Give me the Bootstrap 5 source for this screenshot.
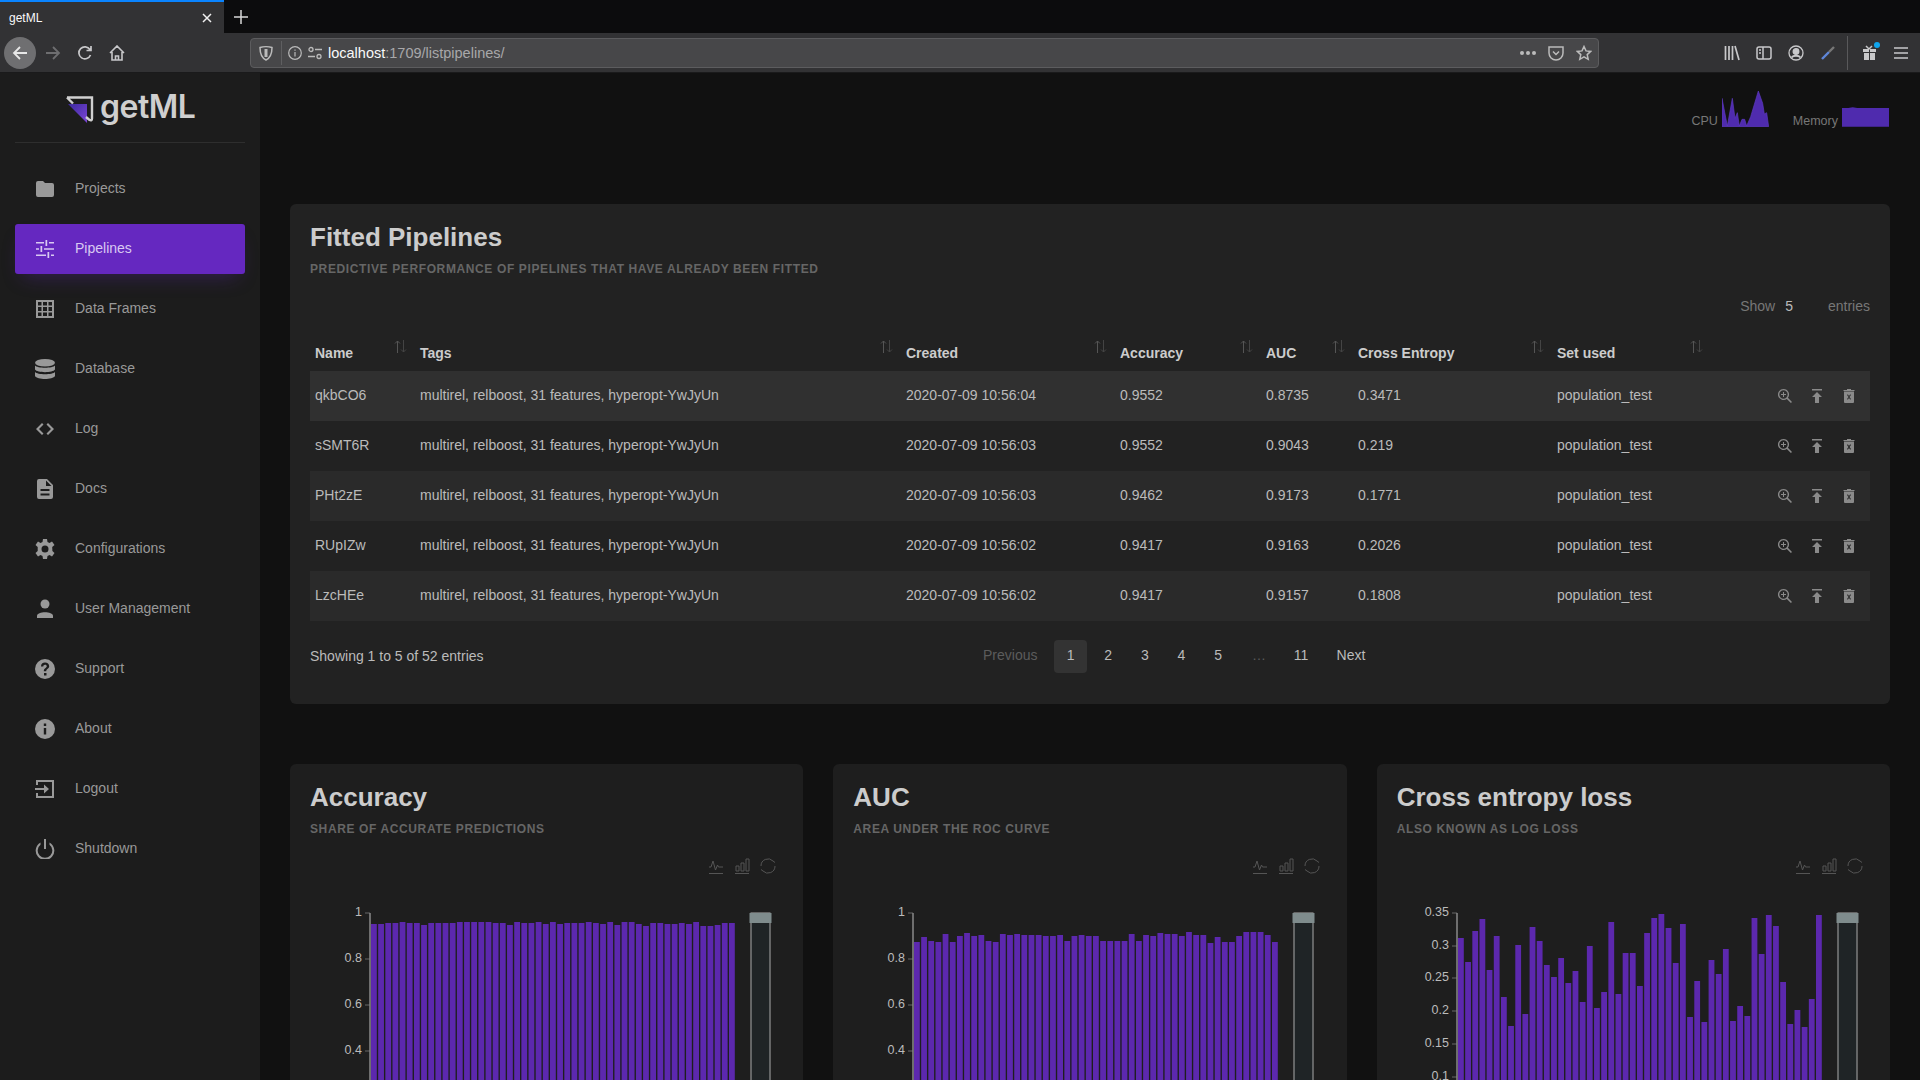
<!DOCTYPE html>
<html lang="en">
<head>
    <meta charset="UTF-8">
    <meta name="viewport" content="width=device-width, initial-scale=1.0">
    <title>getML</title>
    <link href="https://cdn.jsdelivr.net/npm/bootstrap@5.3.0/dist/css/bootstrap.min.css" rel="stylesheet">
    <style>
        html, body { height: 100%; }
        body { background: #111; font-family: "Liberation Sans", Arial, sans-serif; font-size: 14px; color: #bbb; overflow: hidden; }
        svg { display: block; flex: none; }

        /* browser chrome */
        .tab-strip { height: 33px; background: #0c0c0d; }
        .tab-active { width: 224px; background: #323234; border-top: 2px solid #0a84ff; padding: 0 11px 0 9px; color: #f9f9fa; font-size: 12px; }
        .tab-new { width: 34px; color: #d8d8d8; }
        .tool-strip { height: 40px; background: #323234; border-bottom: 1px solid #1a1a1b; color: #c8c8ca; }
        .tool-left { width: 250px; flex: none; padding-left: 4px; }
        .tool-btn { width: 32px; height: 32px; flex: none; }
        .tool-btn-back { background: #6f6f71; border-radius: 50%; margin-right: 1px; }
        .url-box { width: 1349px; flex: none; height: 30px; background: #474749; border: 1px solid #5c5c5e; border-radius: 4px; padding: 0 6px 0 7px; font-size: 14.5px; }
        .url-text { padding-top: 2px; }
        .url-icon { margin-right: 6px; }
        .url-sep { width: 1px; height: 24px; background: #5f5f61; margin: 0 6px 0 7px; }
        .url-host { color: #f9f9fa; }
        .url-rest { color: #a8a8aa; }
        .tool-right { padding-left: 117px; flex: none; }
        .tool-divider { width: 1px; height: 34px; background: #59595b; margin: 0 5px 0 3px; }
        .gift-dot { width: 6px; height: 6px; right: 5px; top: 5px; background: #0fa5ee; }

        /* sidebar */
        .page-wrap { height: calc(100vh - 73px); }
        .side-panel { width: 260px; background: #1c1c1c; padding: 0 15px; }
        .logo-row { height: 70px; border-bottom: 1px solid #2e2e2e; margin-bottom: 21px; padding-left: 50px; }
        .logo-text { font-family: Inter, sans-serif; font-weight: 600; font-size: 32px; line-height: 40px; color: #cfcfcf; margin: -2px 0 0 5px; letter-spacing: -.5px; }
        .side-link { height: 50px; margin-bottom: 10px; border-radius: 3px; color: #999; padding: 0 0 0 20px; gap: 20px; }
        .side-link:hover { color: #999; }
        .side-link span { margin-top: -2px; }
        .side-link.active { background: #6528c0; color: #d9c9f2; box-shadow: 0 10px 20px -8px rgba(101, 40, 192, .35); }
        .side-link.active svg { fill: #d9c9f2; }
        .side-link svg { fill: #999; }

        /* main */
        .main-panel { padding: 0 30px; min-width: 0; }
        .stat-row { height: 131px; padding: 17px 1px 0 0; color: #777; font-size: 12.5px; }
        .stat-item { height: 37px; }
        .dark-card { background: #222; border: 0; border-radius: 6px; }
        .pipe-card { height: 500px; padding: 20px; margin-bottom: 60px; }
        .card-head { font-size: 26px; line-height: 30px; font-weight: 700; color: #ccc; margin: -2px 0 0; }
        .card-sub { font-size: 12px; line-height: 16px; font-weight: 700; color: #666; letter-spacing: .62px; text-transform: uppercase; margin: 9px 0 0; }
        .len-row { height: 20px; margin-top: 19px; font-size: 14px; color: #777; }
        .len-row b { font-weight: 400; color: #bbb; margin: 0 35px 0 10px; }
        .pipe-table { table-layout: fixed; width: 1560px; margin: 14px 0 0; --bs-table-bg: transparent; --bs-table-color: #bbb; color: #bbb; }
        .pipe-table col:nth-child(1) { width: 105px; }
        .pipe-table col:nth-child(2) { width: 486px; }
        .pipe-table col:nth-child(3) { width: 214px; }
        .pipe-table col:nth-child(4) { width: 146px; }
        .pipe-table col:nth-child(5) { width: 92px; }
        .pipe-table col:nth-child(6) { width: 199px; }
        .pipe-table col:nth-child(7) { width: 159px; }
        .pipe-table th { position: relative; height: 41px; padding: 5px 5px 0; border: 0; color: #ccc; font-weight: 700; vertical-align: middle; }
        .pipe-table td { height: 50px; padding: 0 5px 1px; border: 0; vertical-align: middle; background: transparent; color: #bbb; }
        .pipe-table tr.row-alt td { background: #2a2a2a; }
        .pipe-table tr.row-hover td { background: #303030; }
        .sort-arrows { position: absolute; right: 8px; top: 10px; }
        .act-icons { gap: 18px; padding-left: 62px; }
        .act-icons svg { fill: #8a8a8a; }
        .foot-row { margin-top: 19px; height: 33px; }
        .pipe-pager { margin: 0 488px 0 0; --bs-pagination-bg: transparent; }
        .pipe-pager .page-link { background: transparent; border: 0; color: #bbb; padding: 0; height: 33px; line-height: 31px; width: 37.7px; text-align: center; font-size: 14px; border-radius: 4px; }
        .pipe-pager .page-item.active .page-link { background: #333; color: #bbb; width: 33px; }
        .pipe-pager .page-item.disabled .page-link { color: #5c5c5c; }
        .pipe-pager .pg-prev { width: 70px; margin-right: 10px; }
        .pipe-pager .pg-one { margin-right: 3px; }
        .pipe-pager .pg-dots { width: 46px; color: #4d4d4d; }
        .pipe-pager .pg-eleven { width: 40px; }
        .pipe-pager .pg-next { width: 62px; }

        .chart-row { --bs-gutter-x: 30px; }
        .chart-card { background: #1e1e1e; height: 316px; padding: 20px; position: relative; border-radius: 6px 6px 0 0; }
        .chart-tools { height: 26px; margin-top: 16px; gap: 8px; padding-right: 6px; }
        .chart-tools svg { stroke: #555; fill: none; }
        .chart-plot { position: absolute; left: 0; top: 140px; }
        .chart-plot text { fill: #bbb; font-size: 12.5px; font-family: "Liberation Sans", Arial, sans-serif; text-anchor: end; }
    </style>
</head>
<body>
    <div class="tab-strip d-flex">
        <div class="tab-active d-flex align-items-center justify-content-between">
            <span>getML</span>
            <svg width="12" height="12" viewBox="0 0 12 12" stroke="#f0f0f0" stroke-width="1.5"><path d="M2 2l8 8M10 2l-8 8"/></svg>
        </div>
        <div class="tab-new d-flex align-items-center justify-content-center">
            <svg width="14" height="14" viewBox="0 0 14 14" stroke="#d8d8d8" stroke-width="1.5"><path d="M7 0v14M0 7h14"/></svg>
        </div>
    </div>

    <div class="tool-strip d-flex align-items-center">
        <div class="tool-left d-flex align-items-center">
            <div class="tool-btn tool-btn-back d-flex align-items-center justify-content-center">
                <svg width="16" height="16" viewBox="0 0 16 16" fill="none" stroke="#e8e8e8" stroke-width="1.8"><path d="M15 8H2M8 2L2 8l6 6"/></svg>
            </div>
            <div class="tool-btn d-flex align-items-center justify-content-center">
                <svg width="16" height="16" viewBox="0 0 16 16" fill="none" stroke="#6e6e70" stroke-width="1.8"><path d="M1 8h13M8 2l6 6-6 6"/></svg>
            </div>
            <div class="tool-btn d-flex align-items-center justify-content-center">
                <svg width="16" height="16" viewBox="0 0 16 16" fill="none" stroke="#c8c8ca" stroke-width="1.7"><path d="M13.5 10a6 6 0 1 1-.6-5.5M14 1v4.5H9.5"/></svg>
            </div>
            <div class="tool-btn d-flex align-items-center justify-content-center">
                <svg width="16" height="16" viewBox="0 0 16 16" fill="none" stroke="#c8c8ca" stroke-width="1.6"><path d="M1 8l7-7 7 7M3 7v8h10V7M6.5 15v-4h3v4"/></svg>
            </div>
        </div>
        <div class="url-box d-flex align-items-center">
            <svg width="16" height="16" viewBox="0 0 16 16" fill="none" stroke="#bbb" stroke-width="1.5"><path d="M2 2.5C5 1.5 11 1.5 14 2.5c0 6-1 10-6 12.5C3 12.5 2 8.5 2 2.5z"/><path d="M8 4v8" stroke-width="3"/></svg>
            <div class="url-sep"></div>
            <svg width="14" height="14" viewBox="0 0 14 14" fill="none" stroke="#bbb" stroke-width="1.2" class="url-icon"><circle cx="7" cy="7" r="6.3"/><path d="M7 6v4.5M7 3.5v1.3"/></svg>
            <svg width="14" height="14" viewBox="0 0 14 14" fill="none" stroke="#bbb" stroke-width="1.3" class="url-icon"><circle cx="3" cy="3.5" r="2"/><path d="M7 3.5h7M0 10.5h7"/><circle cx="11" cy="10.5" r="2"/></svg>
            <span class="url-text"><span class="url-host">localhost</span><span class="url-rest">:1709/listpipelines/</span></span>
            <div class="ms-auto d-flex align-items-center gap-2">
                <svg width="16" height="4" viewBox="0 0 16 4" fill="#bbb"><circle cx="2" cy="2" r="2"/><circle cx="8" cy="2" r="2"/><circle cx="14" cy="2" r="2"/></svg>
                <svg width="16" height="16" viewBox="0 0 16 16" fill="none" stroke="#bbb" stroke-width="1.5" class="ms-1"><path d="M1 2h14v6a7 7 0 0 1-14 0zM5 6.5l3 3 3-3"/></svg>
                <svg width="16" height="16" viewBox="0 0 16 16" fill="none" stroke="#bbb" stroke-width="1.5" class="ms-1"><path d="M8 1.5l2 4.4 4.7.5-3.5 3.2 1 4.7L8 11.9l-4.200 2.400 1-4.700L1.300 6.400 6 5.900z"/></svg>
            </div>
        </div>
        <div class="tool-right d-flex align-items-center">
            <div class="tool-btn d-flex align-items-center justify-content-center">
                <svg width="16" height="16" viewBox="0 0 16 16" fill="none" stroke="#c8c8ca" stroke-width="1.7"><path d="M1.5 1v14M5 1v14M8.5 1v14M11 1l4 14"/></svg>
            </div>
            <div class="tool-btn d-flex align-items-center justify-content-center">
                <svg width="16" height="16" viewBox="0 0 16 16" fill="none" stroke="#c8c8ca" stroke-width="1.5"><rect x="1" y="2" width="14" height="12" rx="2"/><path d="M7 2v12M3 5h2M3 8h2"/></svg>
            </div>
            <div class="tool-btn d-flex align-items-center justify-content-center">
                <svg width="16" height="16" viewBox="0 0 16 16" fill="none" stroke="#c8c8ca" stroke-width="1.3"><circle cx="8" cy="8" r="7"/><circle cx="8" cy="6.5" r="2.8" fill="#c8c8ca"/><path d="M3.5 12.5c2-2.5 7-2.5 9 0" stroke-width="2"/></svg>
            </div>
            <div class="tool-btn d-flex align-items-center justify-content-center">
                <svg width="16" height="16" viewBox="0 0 16 16" fill="none" stroke-width="2.4"><path d="M2 14l7-7" stroke="#5f86d8"/><path d="M9 7l5-5" stroke="#777"/></svg>
            </div>
            <div class="tool-divider"></div>
            <div class="tool-btn position-relative d-flex align-items-center justify-content-center">
                <svg width="15" height="16" viewBox="0 0 15 16" fill="#c8c8ca"><path d="M1 4h6v3H1zM8 4h6v3H8zM2 8h5v7H2zM8 8h5v7H8z"/><path d="M4 1l3 3 3-3" fill="none" stroke="#c8c8ca" stroke-width="1.5"/></svg>
                <span class="position-absolute rounded-circle gift-dot"></span>
            </div>
            <div class="tool-btn d-flex align-items-center justify-content-center">
                <svg width="14" height="12" viewBox="0 0 14 12" stroke="#c8c8ca" stroke-width="1.7"><path d="M0 1h14M0 6h14M0 11h14"/></svg>
            </div>
        </div>
    </div>

    <div class="page-wrap d-flex">
        <aside class="side-panel flex-shrink-0">
            <div class="logo-row d-flex align-items-center">
                <svg width="30" height="30" viewBox="0 0 30 30"><defs><linearGradient id="logoFill" x1="0" y1="0" x2="1" y2="1"><stop offset="0" stop-color="#3c2a9e"/><stop offset="1" stop-color="#7c45d6"/></linearGradient></defs><path d="M3 11h19v19z" fill="url(#logoFill)"/><path d="M2 4.5h25v21q0 2.5-2.5 1.5L21 24M2 4.500l6 6" fill="none" stroke="#d0d0d0" stroke-width="2.4"/></svg>
                <span class="logo-text">getML</span>
            </div>
            <nav class="nav flex-column" id="sideNav"></nav>
        </aside>

        <main class="main-panel flex-grow-1">
            <div class="stat-row d-flex justify-content-end align-items-start">
                <div class="stat-item d-flex align-items-end">
                    <span class="me-1 lh-1">CPU</span>
                    <svg width="47" height="37" viewBox="966 270 141 111"><path d="M966 380V295L982 378 997 295 1005 355 1012 338 1018 378 1026 358 1034 358 1040 378 1052 350 1075 273 1088 310 1093 342 1100 338 1106 380z" fill="#4f2bae" stroke="#5e3bc0" stroke-width="2"/></svg>
                </div>
                <div class="stat-item d-flex align-items-end ms-4">
                    <span class="me-1 lh-1">Memory</span>
                    <svg width="47" height="37" viewBox="1326 270 141 111"><path d="M1326 380V324H1345L1358 322 1372 324H1467V380z" fill="#4f2bae"/></svg>
                </div>
            </div>

            <section class="card dark-card pipe-card">
                <h2 class="card-head">Fitted Pipelines</h2>
                <p class="card-sub">Predictive performance of pipelines that have already been fitted</p>
                <div class="len-row d-flex justify-content-end align-items-center">Show <b>5</b> entries</div>
                <table class="table pipe-table">
                    <colgroup><col><col><col><col><col><col><col><col></colgroup>
                    <thead>
                        <tr id="headRow"></tr>
                    </thead>
                    <tbody id="pipeRows"></tbody>
                </table>
                <div class="foot-row d-flex justify-content-between align-items-center">
                    <span>Showing 1 to 5 of 52 entries</span>
                    <ul class="pagination pipe-pager">
                        <li class="page-item disabled"><a class="page-link pg-prev" href="#">Previous</a></li>
                        <li class="page-item active"><a class="page-link pg-one" href="#">1</a></li>
                        <li class="page-item"><a class="page-link" href="#">2</a></li>
                        <li class="page-item"><a class="page-link" href="#">3</a></li>
                        <li class="page-item"><a class="page-link" href="#">4</a></li>
                        <li class="page-item"><a class="page-link" href="#">5</a></li>
                        <li class="page-item disabled"><a class="page-link pg-dots" href="#">…</a></li>
                        <li class="page-item"><a class="page-link pg-eleven" href="#">11</a></li>
                        <li class="page-item"><a class="page-link pg-next" href="#">Next</a></li>
                    </ul>
                </div>
            </section>

            <div class="row chart-row" id="chartRow"></div>
        </main>
    </div>

    <script src="https://cdn.jsdelivr.net/npm/bootstrap@5.3.0/dist/js/bootstrap.bundle.min.js"></script>
    <script>
        const sideItems = [
            ["Projects", '<path d="M1 4q0-2 2-2h5l2 2h7q2 0 2 2v10q0 2-2 2H3q-2 0-2-2z"/>'],
            ["Pipelines", '<path d="M1 3h8v1.6H1zM14 3h5v1.6h-5zM10.5 1h1.7v6h-1.7zM1 9.2h3v1.6H1zM9 9.2h10v1.6H9zM5.500 7h1.700v6H5.500zM1 15.400h10v1.600H1zM16 15.400h3v1.600h-3zM12.500 13h1.700v6h-1.700z"/>'],
            ["Data Frames", '<path fill-rule="evenodd" d="M1 1h18v18H1zM3 3v3.5h3.500V3zM8 3v3.500h4V3zM13.500 3v3.500H17V3zM3 8v4h3.500V8zM8 8v4h4V8zM13.500 8v4H17V8zM3 13.500V17h3.500v-3.500zM8 13.500V17h4v-3.500zM13.500 13.500V17H17v-3.500z"/>'],
            ["Database", '<ellipse cx="10" cy="3.8" rx="10" ry="3.8"/><path d="M0 6.500c2 3 18 3 20 0v4c-2 3.500-18 3.500-20 0zM0 13c2 3 18 3 20 0v4c-2 4-18 4-20 0z"/>'],
            ["Log", '<path d="M7 4L1 10l6 6 1.500-1.500L4 10l4.500-4.500zM13 4l6 6-6 6-1.500-1.500L16 10l-4.500-4.500z"/>'],
            ["Docs", '<path fill-rule="evenodd" d="M4 0h8l6 6v12q0 2-2 2H4q-2 0-2-2V2q0-2 2-2zM11 1.500V7h5.500zM5.500 10v2h9v-2zM5.500 14.500v2h9v-2z"/>'],
            ["Configurations", '<path fill-rule="evenodd" d="M8 0h4l.5 3 2 1L17 2.500l2.500 3.500-2.300 2 .1 2 .1 2 2.100 2-2.500 3.500-2.500-1.500-2 1-.5 3H8l-.5-3-2-1L3 17.500.5 14l2.200-2V8L.5 6 3 2.500 5.500 4l2-1zM10 6.500a3.500 3.500 0 1 0 0 7 3.500 3.500 0 0 0 0-7z"/>'],
            ["User Management", '<circle cx="10" cy="5" r="4.500"/><path d="M2 19v-2c0-5 16-5 16 0v2z"/>'],
            ["Support", '<path fill-rule="evenodd" d="M10 0a10 10 0 1 1 0 20 10 10 0 0 1 0-20zM9 14v2.500h2.500V14zM10 3.500c-2.500 0-4 1.500-4 4h2.300c0-1 .6-1.800 1.700-1.800 1.200 0 1.800.7 1.800 1.600 0 1.800-3 1.700-3 5h2.400c0-2.300 3-2.500 3-5 0-2.300-1.700-3.800-4.200-3.800z"/>'],
            ["About", '<path fill-rule="evenodd" d="M10 0a10 10 0 1 1 0 20 10 10 0 0 1 0-20zM8.800 4.500V7h2.400V4.500zM8.800 9v6.500h2.400V9z"/>'],
            ["Logout", '<path d="M1 1h18v18H1v-5h2v3h14V3H3v3H1z"/><path d="M0 9h9V5.500L14 10l-5 4.500V11H0z"/>'],
            ["Shutdown", '<path d="M9 0h2v10H9z"/><path d="M5.500 3.500v2.300a7.300 7.300 0 1 0 9 0V3.500a9.300 9.300 0 1 1-9 0z"/>']
        ];

        document.getElementById("sideNav").innerHTML = sideItems.map(([label, icon]) => `
            <a class="nav-link side-link d-flex align-items-center ${label === "Pipelines" ? "active" : ""}" href="#">
                <svg width="20" height="20" viewBox="0 0 20 20">${icon}</svg>
                <span>${label}</span>
            </a>`).join("");

        const sortIcon = `<svg class="sort-arrows" width="13" height="13" viewBox="0 0 13 13" fill="none" stroke-width="1"><path d="M3.5 13V1M1 3.500L3.500 1 6 3.500" stroke="#555"/><path d="M9.500 0v12M7 9.500L9.500 12 12 9.500" stroke="#444"/></svg>`;
        const heads = ["Name", "Tags", "Created", "Accuracy", "AUC", "Cross Entropy", "Set used"];
        document.getElementById("headRow").innerHTML = heads.map((h) =>
            `<th>${h}${sortIcon}</th>`).join("") + "<th></th>";

        const pipes = [
            ["qkbCO6", "2020-07-09 10:56:04", "0.9552", "0.8735", "0.3471"],
            ["sSMT6R", "2020-07-09 10:56:03", "0.9552", "0.9043", "0.219"],
            ["PHt2zE", "2020-07-09 10:56:03", "0.9462", "0.9173", "0.1771"],
            ["RUpIZw", "2020-07-09 10:56:02", "0.9417", "0.9163", "0.2026"],
            ["LzcHEe", "2020-07-09 10:56:02", "0.9417", "0.9157", "0.1808"]
        ];
        const actionIcons = `
            <div class="act-icons d-flex align-items-center justify-content-start">
                <svg width="14" height="14" viewBox="0 0 14 14"><path fill-rule="evenodd" d="M5.500 0a5.500 5.500 0 0 1 4.400 8.800L14 12.900 12.900 14 8.800 9.900A5.500 5.500 0 1 1 5.500 0zm0 1.300a4.200 4.200 0 1 0 0 8.400 4.200 4.200 0 0 0 0-8.400zM5 3h1v2h2v1H6v2H5V6H3V5h2z"/></svg>
                <svg width="14" height="14" viewBox="0 0 14 14"><path d="M2 0h10v1.500H2zM7 3l5 5H9v6H5V8H2z"/></svg>
                <svg width="14" height="14" viewBox="0 0 14 14"><path fill-rule="evenodd" d="M2 2.500h10V13q0 1-1 1H3q-1 0-1-1zM5 6l1.500 2L5 10l.8.700L7 9l1.200 1.700L9 10 7.500 8 9 6l-.8-.7L7 7 5.800 5.300zM1.500 1H5V0h4v1h3.500v1h-11z"/></svg>
            </div>`;
        document.getElementById("pipeRows").innerHTML = pipes.map((p, i) => `
            <tr class="${i === 0 ? "row-hover" : i % 2 === 0 ? "row-alt" : ""}">
                <td>${p[0]}</td>
                <td>multirel, relboost, 31 features, hyperopt-YwJyUn</td>
                <td>${p[1]}</td><td>${p[2]}</td><td>${p[3]}</td><td>${p[4]}</td>
                <td>population_test</td>
                <td>${actionIcons}</td>
            </tr>`).join("");

        // bar tops are read off the picture, in px below the top of the plot
        const charts = [
            {
                title: "Accuracy", sub: "Share of accurate predictions",
                ticks: [["1", 0], ["0.8", 46], ["0.6", 92], ["0.4", 138]],
                tops: [11,11,10,10,9,10,10,12,10,10,10,10,9,9,9,9,9,10,10,12,9,10,10,9,11,9,11,10,10,10,9,10,11,9,12,9,9,11,13,10,10,11,11,10,11,9,13,13,12,10,10]
            },
            {
                title: "AUC", sub: "Area under the ROC curve",
                ticks: [["1", 0], ["0.8", 46], ["0.6", 92], ["0.4", 138]],
                tops: [29,24,28,29,21,29,23,20,23,22,28,29,21,22,21,22,22,22,23,23,22,28,23,22,23,23,28,28,28,28,21,28,22,23,20,21,21,23,19,22,22,30,24,29,29,23,19,19,19,22,29]
            },
            {
                title: "Cross entropy loss", sub: "Also known as log loss",
                ticks: [["0.35", 0], ["0.3", 33], ["0.25", 65], ["0.2", 98], ["0.15", 131], ["0.1", 164]],
                tops: [25,49,18,6,57,23,84,113,32,101,14,28,52,64,45,70,58,89,33,95,79,9,81,40,40,73,20,5,1,15,50,11,104,68,109,47,61,36,108,93,103,5,41,2,13,69,111,97,114,86,2]
            }
        ];

        document.getElementById("chartRow").innerHTML = charts.map((c) => `
            <div class="col-4">
                <div class="card dark-card chart-card">
                    <h2 class="card-head">${c.title}</h2>
                    <p class="card-sub">${c.sub}</p>
                    <div class="chart-tools d-flex justify-content-end align-items-center">
                        <svg width="18" height="18" viewBox="0 0 18 18"><path d="M2 10h2l2-6 2.500 9 2-5 1 2H16M2 16.500h14"/></svg>
                        <svg width="18" height="18" viewBox="0 0 18 18"><path d="M2 16.500h14M3 14V9h3v5zM8 14V6h3v8zM13 14V2h3v12z"/></svg>
                        <svg width="18" height="18" viewBox="0 0 18 18"><path d="M2 9a7 7 0 0 1 12-5l2 1.500M16 9a7 7 0 0 1-12 5l-2-1.500"/></svg>
                    </div>
                    <svg class="chart-plot" width="513" height="176" viewBox="0 -9 513 176">
                        ${c.ticks.map(([label, y]) => `<text x="72" y="${y + 3}">${label}</text><path d="M75 ${y}h5" stroke="#666"/>`).join("")}
                        ${c.tops.map((t, i) => `<rect x="${81 + i * 7.16}" y="${t}" width="5.8" height="${170 - t}" fill="#5c28ae"/>`).join("")}
                        <path d="M80 0V170" stroke="#8a8a8a" stroke-width="1.5"/>
                        <rect x="461" y="0" width="19" height="170" fill="#1f2426" stroke="#a9a9a9"/>
                        <rect x="459.5" y="0" width="22" height="10" fill="#7f8c8d"/>
                    </svg>
                </div>
            </div>`).join("");
    </script>
</body>
</html>
